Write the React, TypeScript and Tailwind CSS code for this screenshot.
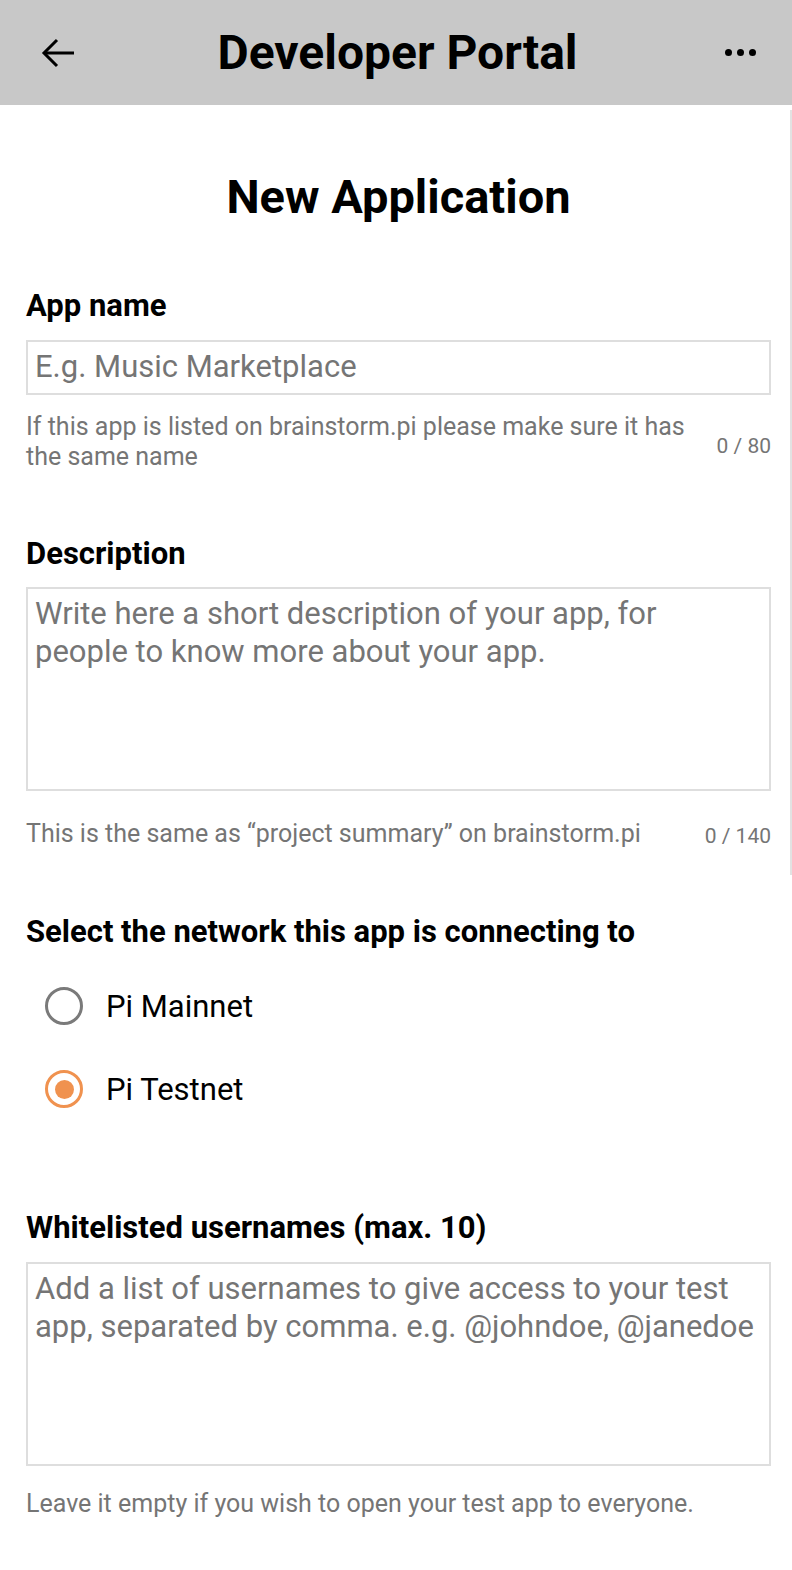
import React from "react";

export default function App() {
  const font = { fontFamily: "Roboto, 'Noto Sans', sans-serif" };
  return (
    <div className="relative w-[792px] min-h-[1570px] bg-white text-black" style={font}>
      <header className="h-[105px] bg-[#c8c8c8] grid grid-cols-[1fr_auto_1fr] items-center">
        <div className="pl-[40px] flex items-center">
          <svg width="34" height="32" viewBox="0 0 34 32" fill="none" stroke="#000" strokeWidth="3">
            <path d="M34 16H4" />
            <path d="M17 3L4 16l13 13" />
          </svg>
        </div>
        <h1 className="text-[48px] font-bold leading-none pl-[3px]">Developer Portal</h1>
        <div className="flex justify-end pr-[36px] gap-[5px]">
          <span className="w-[7px] h-[7px] rounded-full bg-black" />
          <span className="w-[7px] h-[7px] rounded-full bg-black" />
          <span className="w-[7px] h-[7px] rounded-full bg-black" />
        </div>
      </header>

      <main className="pl-[26px] pr-[21px]">
        <h2 className="text-center text-[47px] font-bold leading-none pt-[68px] pb-[70px]">New Application</h2>

        <section>
          <label className="block text-[31px] font-bold leading-none mb-[19px]">App name</label>
          <div className="h-[55px] border-2 border-[#dedede] flex items-center px-[7px]">
            <span className="text-[31px] text-[#757575]">E.g. Music Marketplace</span>
          </div>
          <div className="flex items-center justify-between mt-[17px] text-[#757575]">
            <p className="w-[680px] text-[25px] leading-[30px]">If this app is listed on brainstorm.pi please make sure it has the same name</p>
            <span className="text-[21px] leading-[30px] pt-[8px]">0 / 80</span>
          </div>
        </section>

        <section className="mt-[66px]">
          <label className="block text-[31px] font-bold leading-none mb-[18px]">Description</label>
          <div className="h-[204px] border-2 border-[#dedede] px-[7px] pt-[6px]">
            <p className="text-[31px] text-[#757575] leading-[38px]">
              Write here a short description of your app, for<br />people to know more about your app.
            </p>
          </div>
          <div className="flex items-center justify-between mt-[26px] text-[#757575]">
            <p className="text-[25px] leading-[30px]">This is the same as “project summary” on brainstorm.pi</p>
            <span className="text-[21px] leading-[30px] pt-[4px]">0 / 140</span>
          </div>
        </section>

        <section className="mt-[65px]">
          <label className="block text-[31px] font-bold leading-none">Select the network this app is connecting to</label>
          <div className="mt-[40px] flex flex-col gap-[45px] pl-[19px]">
            <div className="flex items-center gap-[23px]">
              <span className="w-[38px] h-[38px] rounded-full border-[3px] border-[#7a7a7a]" />
              <span className="text-[31px] leading-none">Pi Mainnet</span>
            </div>
            <div className="flex items-center gap-[23px]">
              <span className="w-[38px] h-[38px] rounded-full border-[3px] border-[#f0924f] flex items-center justify-center">
                <span className="w-[19px] h-[19px] rounded-full bg-[#f0924f]" />
              </span>
              <span className="text-[31px] leading-none">Pi Testnet</span>
            </div>
          </div>
        </section>

        <section className="mt-[104px]">
          <label className="block text-[31px] font-bold leading-none mb-[19px]">Whitelisted usernames (max. 10)</label>
          <div className="h-[204px] border-2 border-[#dedede] px-[7px] pt-[6px]">
            <p className="text-[31px] text-[#757575] leading-[38px] whitespace-nowrap">
              Add a list of usernames to give access to your test<br />app, separated by comma. e.g. @johndoe, @janedoe
            </p>
          </div>
          <p className="mt-[23px] text-[25px] text-[#757575] leading-[30px]">Leave it empty if you wish to open your test app to everyone.</p>
        </section>
      </main>

      <div className="absolute right-0 top-[110px] h-[765px] w-[2px] bg-[#e2e2e2]" />
    </div>
  );
}
